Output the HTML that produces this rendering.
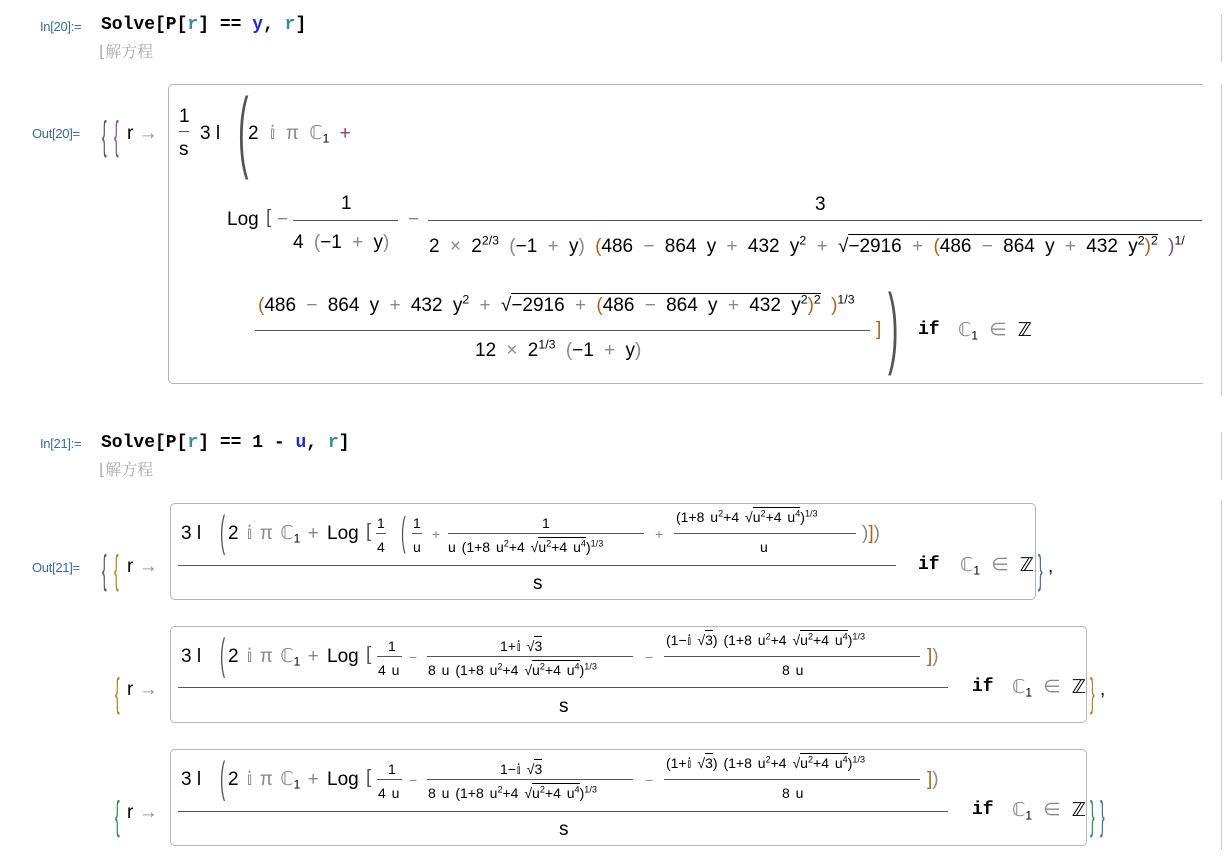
<!DOCTYPE html>
<html><head><meta charset="utf-8"><style>
body{margin:0;width:1228px;height:858px;background:#fff;position:relative;overflow:hidden;font-family:"Liberation Sans","Noto Sans CJK SC",sans-serif;color:#000}
.a{position:absolute;white-space:nowrap;line-height:1}
.lbl{font-size:13px;color:#3d6a9e;letter-spacing:-0.3px}
.code{font-family:"Liberation Mono",monospace;font-weight:bold;font-size:18px}
.bl{color:#1b2fd3}.tl{color:#3f8a99}
.cn{color:#aaa;font-size:16px;font-family:"Noto Serif CJK SC","Noto Sans CJK SC",serif}
.m{font-size:19px}.s{font-size:14px;word-spacing:2px}
.w{word-spacing:5px}
.w2{word-spacing:2px}
.g{color:#888}
.box{position:absolute;border:1px solid #b5b5b5;border-radius:5px}
.hl{position:absolute;height:1px;background:#555}
.bp{position:absolute;line-height:1;transform:scaleX(0.35);transform-origin:left top;color:#555;font-weight:100}
sup{font-size:65%;vertical-align:0.6em;line-height:0}
sub{font-size:65%;vertical-align:-0.3em;line-height:0}
.ov{border-top:1px solid #000;padding-top:1px}
</style></head><body>
<div class="a" style="left:1221px;top:14px;width:1px;height:48px;background:#ccc"></div>
<div class="a" style="left:1221px;top:84px;width:1px;height:312px;background:#ccc"></div>
<div class="a" style="left:1221px;top:432px;width:1px;height:48px;background:#ccc"></div>
<div class="a" style="left:1221px;top:500px;width:1px;height:350px;background:#ccc"></div>

<div class="a lbl" style="left:40px;top:20px">In[20]:=</div>
<div class="a code" style="left:101px;top:16px">Solve[P[<span class="tl">r</span>] == <span class="bl">y</span>, <span class="tl">r</span>]</div>
<div class="a cn" style="left:99px;top:43px">⌊解方程</div>

<div class="a lbl" style="left:32px;top:127px">Out[20]=</div>
<div class="bp" style="left:102px;top:116px;font-size:40px">{</div>
<div class="bp" style="left:114px;top:116px;font-size:40px;color:#7a4a9a">{</div>
<div class="a m" style="left:127px;top:124px">r <span class="g">→</span></div>
<div class="box" style="left:168px;top:84px;width:1034px;height:298px;border-right:none;border-radius:5px 0 0 5px"></div>
<div class="a m" style="left:179px;top:107px">1</div>
<div class="hl" style="left:179px;top:131px;width:10px"></div>
<div class="a m" style="left:179px;top:140px">s</div>
<div class="a m" style="left:200px;top:124px">3 l</div>
<div class="bp" style="left:238px;top:86px;font-size:90px">(</div>
<div class="a m w" style="left:248px;top:124px">2 <span class="g">𝕚 π ℂ</span><sub>1</sub> <span style="color:#a03060">+</span></div>

<div class="a m" style="left:227px;top:210px">Log</div>
<div class="a m" style="left:266px;top:208px;color:#555">[</div>
<div class="a m" style="left:277px;top:210px;color:#888">−</div>
<div class="a m" style="left:341px;top:194px">1</div>
<div class="hl" style="left:293px;top:220px;width:105px"></div>
<div class="a m w" style="left:293px;top:233px">4 <span class="g">(</span>−1 <span class="g">+</span> y<span class="g">)</span></div>
<div class="a m" style="left:408px;top:210px;color:#888">−</div>
<div class="a m" style="left:815px;top:195px">3</div>
<div class="hl" style="left:428px;top:220px;width:774px"></div>
<div class="a m w" style="left:429px;top:237px">2 <span class="g">×</span> 2<sup>2/3</sup> <span class="g">(</span>−1 <span class="g">+</span> y<span class="g">)</span> <span style="color:#b06020">(</span>486 <span class="g">−</span> 864 y <span class="g">+</span> 432 y<sup>2</sup> <span class="g">+</span> √<span class="ov">−2916 <span class="g">+</span> <span style="color:#b06020">(</span>486 <span class="g">−</span> 864 y <span class="g">+</span> 432 y<sup>2</sup><span style="color:#b06020">)</span><sup>2</sup></span> <span style="color:#7a4a9a">)</span><sup>1/</sup></div>

<div class="a m w" style="left:258px;top:296px"><span style="color:#b06020">(</span>486 <span class="g">−</span> 864 y <span class="g">+</span> 432 y<sup>2</sup> <span class="g">+</span> √<span class="ov">−2916 <span class="g">+</span> <span style="color:#b06020">(</span>486 <span class="g">−</span> 864 y <span class="g">+</span> 432 y<sup>2</sup><span style="color:#b06020">)</span><sup>2</sup></span> <span style="color:#b06020">)</span><sup>1/3</sup></div>
<div class="hl" style="left:255px;top:330px;width:615px"></div>
<div class="a m w" style="left:475px;top:341px">12 <span class="g">×</span> 2<sup>1/3</sup> <span class="g">(</span>−1 <span class="g">+</span> y<span class="g">)</span></div>
<div class="a m" style="left:876px;top:320px;color:#b06020">]</div>
<div class="bp" style="left:888px;top:282px;font-size:90px">)</div>
<div class="a code" style="left:918px;top:321px">if</div>
<div class="a m w" style="left:958px;top:321px"><span class="g">ℂ</span><sub>1</sub> <span class="g">∈</span> ℤ</div>

<div class="a lbl" style="left:40px;top:437px">In[21]:=</div>
<div class="a code" style="left:101px;top:434px">Solve[P[<span class="tl">r</span>] == 1 - <span class="bl">u</span>, <span class="tl">r</span>]</div>
<div class="a cn" style="left:99px;top:461px">⌊解方程</div>

<div class="a lbl" style="left:32px;top:561px">Out[21]=</div>
<div class="bp" style="left:102px;top:550px;font-size:40px">{</div>
<div class="bp" style="left:114px;top:550px;font-size:40px;color:#b08020">{</div>
<div class="a m" style="left:127px;top:557px">r <span class="g">→</span></div>
<div class="box" style="left:170px;top:503px;width:864px;height:95px"></div>
<div class="a m" style="left:181px;top:524px">3 l</div>
<div class="bp" style="left:220px;top:510px;font-size:44px">(</div>
<div class="a m w2" style="left:228px;top:524px">2 <span class="g">𝕚 π ℂ</span><sub>1</sub> <span class="g">+</span></div>
<div class="a m" style="left:327px;top:524px">Log</div>
<div class="a m" style="left:366px;top:522px;color:#555">[</div>
<div class="a s" style="left:377px;top:516px">1</div><div class="hl" style="left:376px;top:533px;width:10px"></div><div class="a s" style="left:377px;top:540px">4</div>
<div class="bp" style="left:401px;top:512px;font-size:40px">(</div>
<div class="a s" style="left:413px;top:516px">1</div><div class="hl" style="left:412px;top:533px;width:10px"></div><div class="a s" style="left:413px;top:540px">u</div>
<div class="a s" style="left:432px;top:527px;color:#888">+</div>
<div class="a s" style="left:542px;top:516px">1</div><div class="hl" style="left:448px;top:533px;width:196px"></div>
<div class="a s" style="left:448px;top:540px">u (1+8 u<sup>2</sup>+4 √<span class="ov">u<sup>2</sup>+4 u<sup>4</sup></span>)<sup>1/3</sup></div>
<div class="a s" style="left:655px;top:527px;color:#888">+</div>
<div class="a s" style="left:676px;top:510px">(1+8 u<sup>2</sup>+4 √<span class="ov">u<sup>2</sup>+4 u<sup>4</sup></span>)<sup>1/3</sup></div>
<div class="hl" style="left:674px;top:533px;width:182px"></div>
<div class="a s" style="left:760px;top:540px">u</div>
<div class="a m" style="left:862px;top:524px;color:#888">)<span style="color:#b06020">]</span>)</div>
<div class="hl" style="left:178px;top:565px;width:718px"></div>
<div class="a m" style="left:533px;top:574px">s</div>
<div class="a code" style="left:918px;top:556px">if</div>
<div class="a m w" style="left:960px;top:556px"><span class="g">ℂ</span><sub>1</sub> <span class="g">∈</span> ℤ</div>
<div class="bp" style="left:1038px;top:550px;font-size:40px;color:#3d6a9e">}</div>
<div class="a m" style="left:1048px;top:557px">,</div>

<div class="bp" style="left:115px;top:673px;font-size:40px;color:#b08020">{</div>
<div class="a m" style="left:127px;top:680px">r <span class="g">→</span></div>
<div class="box" style="left:170px;top:626px;width:915px;height:95px"></div>
<div class="a m" style="left:181px;top:647px">3 l</div>
<div class="bp" style="left:220px;top:633px;font-size:44px">(</div>
<div class="a m w2" style="left:228px;top:647px">2 <span class="g">𝕚 π ℂ</span><sub>1</sub> <span class="g">+</span></div>
<div class="a m" style="left:327px;top:647px">Log</div>
<div class="a m" style="left:366px;top:645px;color:#555">[</div>
<div class="a s" style="left:388px;top:639px">1</div><div class="hl" style="left:377px;top:656px;width:25px"></div><div class="a s" style="left:378px;top:663px">4 u</div>
<div class="a s" style="left:409px;top:650px;color:#888">−</div>
<div class="a s" style="left:500px;top:639px">1+𝕚 √<span class="ov">3</span></div>
<div class="hl" style="left:427px;top:656px;width:206px"></div>
<div class="a s" style="left:428px;top:663px">8 u (1+8 u<sup>2</sup>+4 √<span class="ov">u<sup>2</sup>+4 u<sup>4</sup></span>)<sup>1/3</sup></div>
<div class="a s" style="left:645px;top:650px;color:#888">−</div>
<div class="a s" style="left:666px;top:633px">(1−𝕚 √<span class="ov">3</span>) (1+8 u<sup>2</sup>+4 √<span class="ov">u<sup>2</sup>+4 u<sup>4</sup></span>)<sup>1/3</sup></div>
<div class="hl" style="left:664px;top:656px;width:256px"></div>
<div class="a s" style="left:782px;top:663px">8 u</div>
<div class="a m" style="left:927px;top:647px;color:#888"><span style="color:#b06020">]</span>)</div>
<div class="hl" style="left:178px;top:687px;width:770px"></div>
<div class="a m" style="left:559px;top:697px">s</div>
<div class="a code" style="left:972px;top:678px">if</div>
<div class="a m w" style="left:1012px;top:678px"><span class="g">ℂ</span><sub>1</sub> <span class="g">∈</span> ℤ</div>
<div class="bp" style="left:1090px;top:673px;font-size:40px;color:#b08020">}</div>
<div class="a m" style="left:1100px;top:680px">,</div>

<div class="bp" style="left:115px;top:796px;font-size:40px;color:#2a8a4a">{</div>
<div class="a m" style="left:127px;top:803px">r <span class="g">→</span></div>
<div class="box" style="left:170px;top:749px;width:915px;height:95px"></div>
<div class="a m" style="left:181px;top:770px">3 l</div>
<div class="bp" style="left:220px;top:756px;font-size:44px">(</div>
<div class="a m w2" style="left:228px;top:770px">2 <span class="g">𝕚 π ℂ</span><sub>1</sub> <span class="g">+</span></div>
<div class="a m" style="left:327px;top:770px">Log</div>
<div class="a m" style="left:366px;top:768px;color:#555">[</div>
<div class="a s" style="left:388px;top:762px">1</div><div class="hl" style="left:377px;top:779px;width:25px"></div><div class="a s" style="left:378px;top:786px">4 u</div>
<div class="a s" style="left:409px;top:773px;color:#888">−</div>
<div class="a s" style="left:500px;top:762px">1−𝕚 √<span class="ov">3</span></div>
<div class="hl" style="left:427px;top:779px;width:206px"></div>
<div class="a s" style="left:428px;top:786px">8 u (1+8 u<sup>2</sup>+4 √<span class="ov">u<sup>2</sup>+4 u<sup>4</sup></span>)<sup>1/3</sup></div>
<div class="a s" style="left:645px;top:773px;color:#888">−</div>
<div class="a s" style="left:666px;top:756px">(1+𝕚 √<span class="ov">3</span>) (1+8 u<sup>2</sup>+4 √<span class="ov">u<sup>2</sup>+4 u<sup>4</sup></span>)<sup>1/3</sup></div>
<div class="hl" style="left:664px;top:779px;width:256px"></div>
<div class="a s" style="left:782px;top:786px">8 u</div>
<div class="a m" style="left:927px;top:770px;color:#888"><span style="color:#b06020">]</span>)</div>
<div class="hl" style="left:178px;top:811px;width:770px"></div>
<div class="a m" style="left:559px;top:820px">s</div>
<div class="a code" style="left:972px;top:801px">if</div>
<div class="a m w" style="left:1012px;top:801px"><span class="g">ℂ</span><sub>1</sub> <span class="g">∈</span> ℤ</div>
<div class="bp" style="left:1090px;top:796px;font-size:40px;color:#2a8a4a">}</div>
<div class="bp" style="left:1100px;top:796px;font-size:40px;color:#3d6a9e">}</div>
</body></html>
